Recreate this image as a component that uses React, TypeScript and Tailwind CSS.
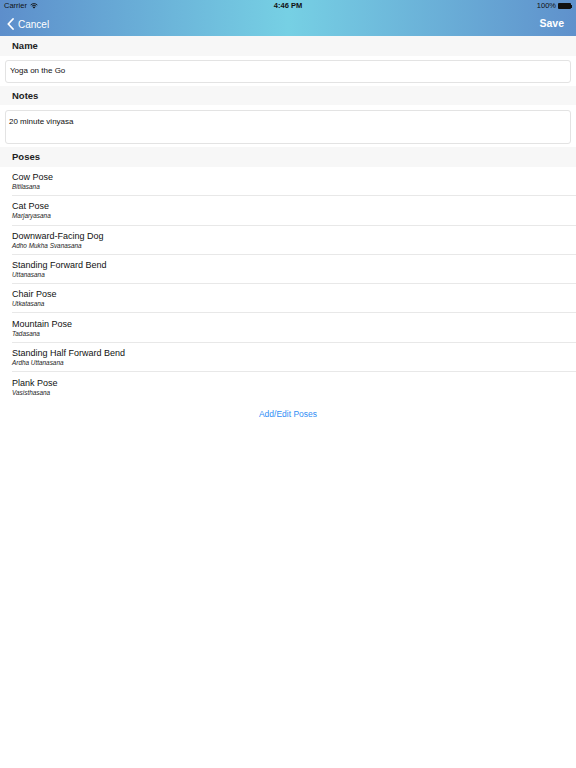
import React from "react";

const poses = [
  ["Cow Pose", "Bitilasana"],
  ["Cat Pose", "Marjaryasana"],
  ["Downward-Facing Dog", "Adho Mukha Svanasana"],
  ["Standing Forward Bend", "Uttanasana"],
  ["Chair Pose", "Utkatasana"],
  ["Mountain Pose", "Tadasana"],
  ["Standing Half Forward Bend", "Ardha Uttanasana"],
  ["Plank Pose", "Vasisthasana"],
];

export default function App() {
  return (
    <div className="w-[576px] h-[768px] bg-white font-['Liberation_Sans',Arial,sans-serif] text-[#111]">
      <div className="h-[36px] bg-[linear-gradient(90deg,#5d8ecb_0%,#76d0e4_50%,#5f91cc_100%)] flex flex-col">
        <div className="h-[12px] relative flex items-center justify-between px-[4px] text-[7.5px] text-[#111]">
          <div className="flex items-center gap-[3px]">
            <span>Carrier</span>
            <svg width="8" height="6" viewBox="0 0 16 12">
              <path d="M8 11 L5.5 8.3 A3.6 3.6 0 0 1 10.5 8.3 Z" fill="#111" />
              <path d="M3.6 6.4 A6.3 6.3 0 0 1 12.4 6.4" stroke="#111" strokeWidth="1.8" fill="none" />
              <path d="M1.3 4 A9.6 9.6 0 0 1 14.7 4" stroke="#111" strokeWidth="1.8" fill="none" />
            </svg>
          </div>
          <span className="absolute left-0 right-0 text-center font-bold text-[7.5px]">4:46 PM</span>
          <div className="flex items-center gap-[2px]">
            <span>100%</span>
            <div className="flex items-center">
              <div className="w-[13px] h-[6px] bg-[#111] rounded-[1px]" />
              <div className="w-[1px] h-[3px] bg-[#111]" />
            </div>
          </div>
        </div>
        <div className="flex-1 flex items-center justify-between pl-[7px] pr-[12px] text-white text-[10px]">
          <div className="flex items-center gap-[4px]">
            <svg width="7" height="12" viewBox="0 0 7 12">
              <path d="M6 1 L1.3 6 L6 11" stroke="white" strokeWidth="1.8" fill="none" strokeLinecap="round" strokeLinejoin="round" />
            </svg>
            <span>Cancel</span>
          </div>
          <span className="font-semibold text-[10.5px]">Save</span>
        </div>
      </div>

      <div className="h-[20px] bg-[#f7f7f7] flex items-center pl-[12px] pt-[1px] text-[9.5px] font-semibold text-[#222]">Name</div>
      <div className="h-[30px] flex items-center px-[5px]">
        <div className="w-full h-[23px] border border-[#e3e3e3] rounded-[3px] flex items-center pl-[4px] text-[8px]">Yoga on the Go</div>
      </div>

      <div className="h-[19px] bg-[#f7f7f7] flex items-center pl-[12px] pt-[1px] text-[9.5px] font-semibold text-[#222]">Notes</div>
      <div className="h-[42px] pt-[5px] px-[5px]">
        <div className="w-full h-[34px] border border-[#e3e3e3] rounded-[3px] pl-[3px] pt-[5px] text-[8px]">20 minute vinyasa</div>
      </div>

      <div className="h-[20px] bg-[#f7f7f7] flex items-center pl-[12px] pt-[1px] text-[9.5px] font-semibold text-[#222]">Poses</div>
      <div>
        {poses.map(([name, sub], i) => (
          <div key={name} className="pl-[12px]">
            <div className={`h-[29.3px] pt-[1px] flex flex-col justify-center ${i < poses.length - 1 ? "border-b border-[#e8e8e8]" : ""}`}>
              <div className="text-[9px] leading-[11px]">{name}</div>
              <div className="text-[6.4px] italic leading-[8px] text-[#222]">{sub}</div>
            </div>
          </div>
        ))}
      </div>
      <div className="flex justify-center pt-[7px] text-[8.5px] text-[#2f8ef5]">Add/Edit Poses</div>
    </div>
  );
}
